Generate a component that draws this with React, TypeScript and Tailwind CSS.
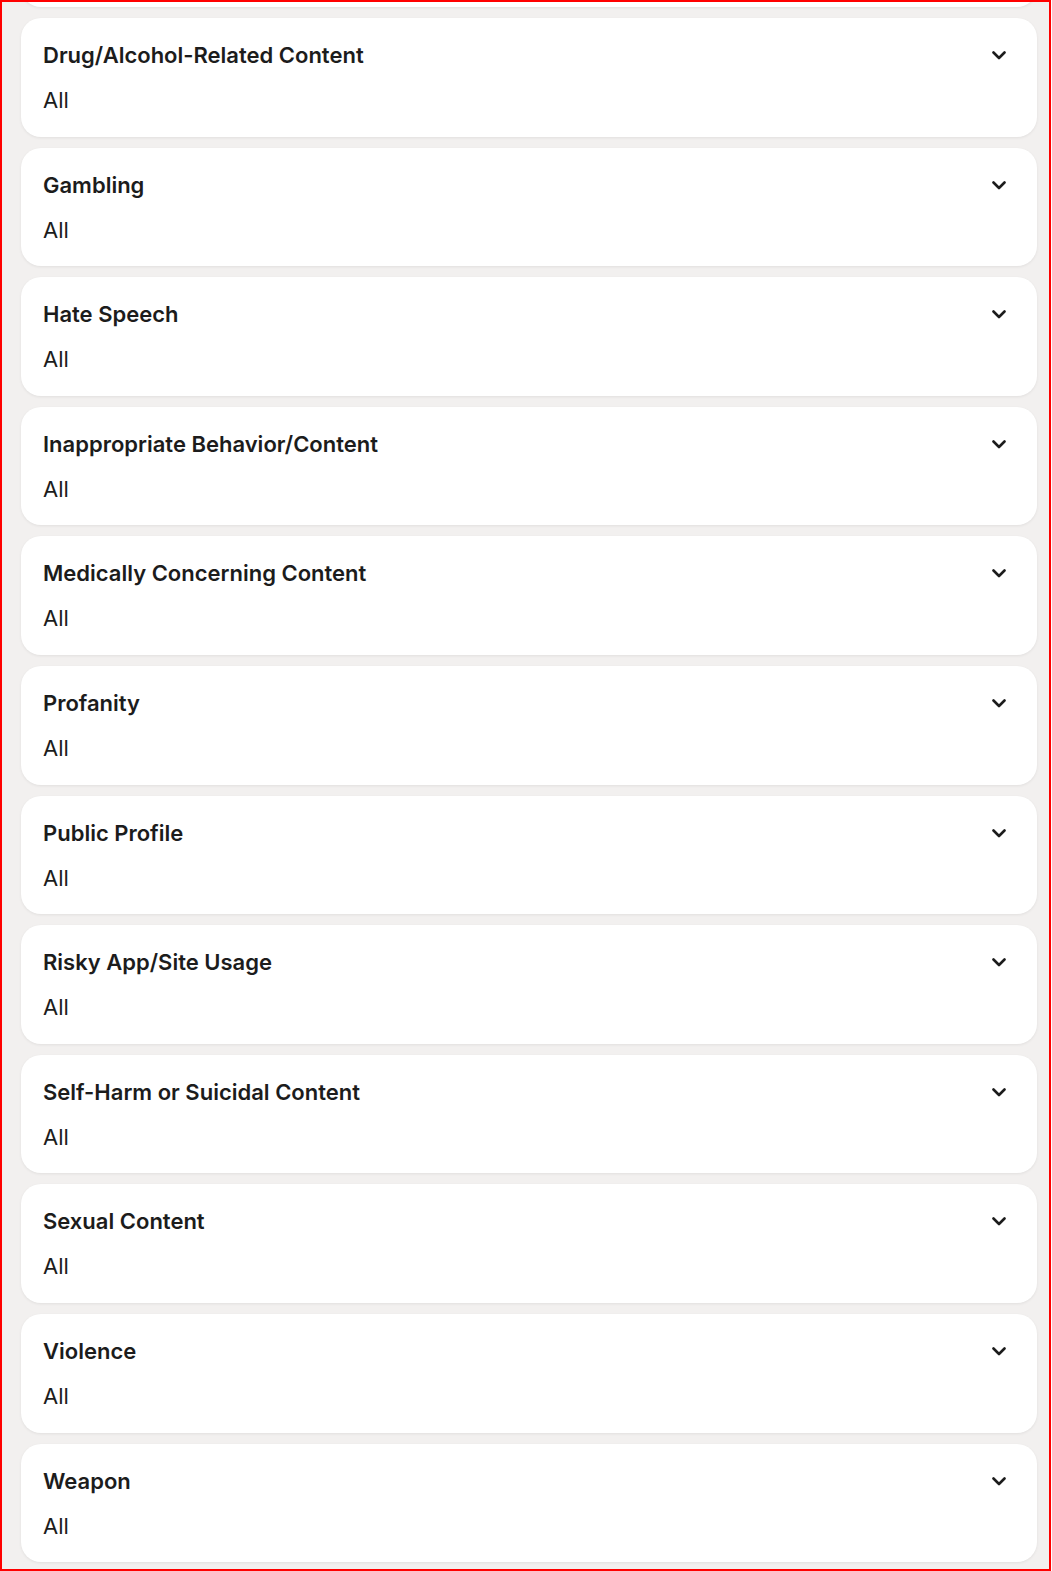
import React from "react";

const items = [
  "Drug/Alcohol-Related Content",
  "Gambling",
  "Hate Speech",
  "Inappropriate Behavior/Content",
  "Medically Concerning Content",
  "Profanity",
  "Public Profile",
  "Risky App/Site Usage",
  "Self-Harm or Suicidal Content",
  "Sexual Content",
  "Violence",
  "Weapon",
];

function Chevron() {
  return (
    <svg width="14" height="9" viewBox="0 0 14 9" fill="none" className="shrink-0">
      <path d="M1.5 1.5 L7 7 L12.5 1.5" stroke="#1c1c1c" strokeWidth="2.6" strokeLinecap="round" strokeLinejoin="round" />
    </svg>
  );
}

function Card({ title, empty }: { title?: string; empty?: boolean }) {
  return (
    <div className="h-[118.6px] shrink-0 rounded-[20px] bg-white shadow-[0_1px_3px_rgba(0,0,0,0.07)] pl-[22px] pr-[31px] pt-[23px] flex flex-col">
      {!empty && (
        <>
          <div className="flex items-center justify-between h-[29px]">
            <span className="text-[22px] font-semibold text-[#1c1c1c] leading-[29px] tracking-[0px]">{title}</span>
            <Chevron />
          </div>
          <div className="mt-[16px] text-[22px] text-[#1c1c1c] leading-[29px]">All</div>
        </>
      )}
    </div>
  );
}

export default function App() {
  return (
    <div
      className="w-[1051px] h-[1571px] border-2 border-[#ff0000] bg-[#f2f0ef] overflow-hidden"
      style={{ fontFamily: "Inter, 'Noto Sans', sans-serif" }}
    >
      <div className="flex flex-col gap-[11px] mt-[-113.6px] pl-[19px] pr-[12px]">
        <Card empty />
        {items.map((t) => (
          <Card key={t} title={t} />
        ))}
      </div>
    </div>
  );
}
